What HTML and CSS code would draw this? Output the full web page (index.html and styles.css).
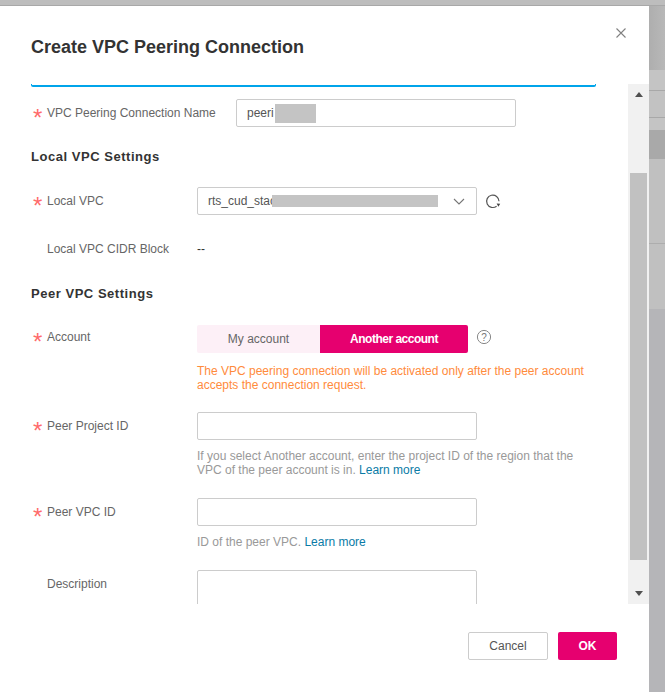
FILE: index.html
```html
<!DOCTYPE html>
<html lang="en">
<head>
<meta charset="utf-8">
<title>Create VPC Peering Connection</title>
<link rel="stylesheet" href="styles.css">
</head>
<body>
<div class="page">
  <div class="top-band"></div>
  <div class="stage">
    <section class="modal">
      <header class="modal-head">
        <h1 class="modal-title">Create VPC Peering Connection</h1>
        <svg class="close" viewBox="0 0 12 12" width="12" height="12"><path d="M1.5 1.5l9 9M10.5 1.5l-9 9" fill="none" stroke="#808080" stroke-width="1.1"/></svg>
      </header>
      <div class="modal-body">
        <div class="form">
          <div class="blue-edge"></div>
          <div class="row row-name">
            <div class="label label-wide"><span class="star">*</span>VPC Peering Connection Name</div>
            <div class="input input-name"><span class="val">peeri</span><span class="mask mask-name"></span></div>
          </div>
          <h2 class="section section-local">Local VPC Settings</h2>
          <div class="row row-local">
            <div class="label"><span class="star">*</span>Local VPC</div>
            <div class="input select"><span class="val val-select">rts_cud_stac</span><span class="mask mask-select"></span>
              <svg class="chev" viewBox="0 0 12 7" width="12" height="7"><path d="M1 1l5 5 5-5" fill="none" stroke="#777" stroke-width="1.1"/></svg>
            </div>
            <svg class="refresh" viewBox="0 0 16 16" width="16" height="16"><path d="M11.6 13.2A6.2 6.2 0 1 1 14 8.2" fill="none" stroke="#555" stroke-width="1.2"/><path d="M11.6 10.6l3.6.2-1.8 2.9z" fill="#444"/></svg>
          </div>
          <div class="row row-cidr">
            <div class="label"><span class="star star-none"></span>Local VPC CIDR Block</div>
            <div class="plain">--</div>
          </div>
          <h2 class="section section-peer">Peer VPC Settings</h2>
          <div class="row row-account">
            <div class="label label-account"><span class="star">*</span>Account</div>
            <div class="toggle">
              <div class="tab tab-off">My account</div>
              <div class="tab tab-on">Another account</div>
            </div>
            <svg class="help" viewBox="0 0 16 16" width="16" height="16"><circle cx="8" cy="8" r="6.6" fill="none" stroke="#888" stroke-width="1"/><text x="8" y="11.6" text-anchor="middle" class="help-q">?</text></svg>
          </div>
          <p class="warn">The VPC peering connection will be activated only after the peer account accepts the connection request.</p>
          <div class="row row-project">
            <div class="label"><span class="star">*</span>Peer Project ID</div>
            <div class="input"></div>
          </div>
          <p class="hint hint-project">If you select Another account, enter the project ID of the region that the VPC of the peer account is in. <a class="link">Learn more</a></p>
          <div class="row row-vpcid">
            <div class="label"><span class="star">*</span>Peer VPC ID</div>
            <div class="input"></div>
          </div>
          <p class="hint hint-vpc">ID of the peer VPC. <a class="link">Learn more</a></p>
          <div class="row row-desc">
            <div class="label label-desc"><span class="star star-none"></span>Description</div>
            <div class="input textarea"></div>
          </div>
        </div>
        <div class="scrollbar">
          <div class="arrow arrow-up"></div>
          <div class="track"><div class="thumb"></div></div>
          <div class="arrow arrow-down"></div>
        </div>
      </div>
      <footer class="modal-foot">
        <button class="btn btn-cancel">Cancel</button>
        <button class="btn btn-ok">OK</button>
      </footer>
    </section>
    <aside class="backdrop">
      <div class="bd bd-a"></div>
      <div class="bd bd-b"></div>
      <div class="bd bd-c"></div>
      <div class="bd bd-d"></div>
      <div class="bd bd-e"></div>
      <div class="bd bd-f"></div>
      <div class="bd bd-f2"></div>
      <div class="bd bd-g"></div>
    </aside>
  </div>
</div>
</body>
</html>
```
FILE: styles.css
```css
* { box-sizing: border-box; }
html, body { margin: 0; padding: 0; }
body { font-family: "Liberation Sans", Arial, sans-serif; font-size: 12px; color: #666; background: #b8b8b8; }
.page { width: 665px; height: 692px; overflow: hidden; display: flex; flex-direction: column; }
.top-band { height: 6px; background: #bdbdbd; border-bottom: 1px solid #a8a8a8; flex: none; }
.stage { flex: 1; display: flex; min-height: 0; }

.modal { width: 649px; background: #fff; display: flex; flex-direction: column; flex: none; }
.modal-head { height: 78px; flex: none; display: flex; justify-content: space-between; padding: 31px 22px 0 31px; }
.modal-title { margin: 0; font-size: 18px; line-height: 20px; font-weight: 700; color: #333; }
.close { margin-top: -10px; }

.modal-body { height: 520px; flex: none; display: flex; }
.form { flex: 1; overflow: hidden; padding-left: 31px; padding-right: 32px; }
.blue-edge { height: 3px; border: 1px solid #00a4ea; border-top: 0; border-width: 0 1px 2px; border-radius: 0 0 2px 2px; }

.row { display: flex; align-items: center; }
.label { width: 166px; flex: none; display: flex; align-items: center; color: #666; line-height: 16px; white-space: nowrap; }
.label-wide { width: 205px; }
.star { width: 16px; flex: none; padding-left: 2px; color: #ff6b6b; font-size: 24px; line-height: 24px; height: 14px; }
.star-none { height: 0; }
.input { width: 280px; height: 28px; flex: none; border: 1px solid #ccc; border-radius: 2px; background: #fff; display: flex; align-items: center; padding-left: 10px; color: #555; overflow: hidden; }
.val { flex: none; }
.mask { display: block; flex: none; background: #c4c4c4; }
.mask-name { width: 41px; height: 19px; margin-left: 1px; }
.mask-select { width: 166px; height: 12px; margin-left: -4px; }
.select { padding-left: 10px; justify-content: flex-start; }
.chev { margin-left: 15px; flex: none; }
.refresh { margin-left: 8px; flex: none; }
.plain { color: #333; }

.row-name { margin-top: 12px; }
.section { margin: 0; font-size: 13px; line-height: 16px; font-weight: 700; color: #333; letter-spacing: 0.53px; }
.section-local { margin-top: 22px; }
.row-local { margin-top: 22px; }
.row-cidr { margin-top: 26px; height: 16px; }
.section-peer { margin-top: 29px; }
.row-account { margin-top: 23px; align-items: flex-start; }
.label-account { padding-top: 4px; }
.toggle { display: flex; flex: none; height: 28px; }
.tab { height: 28px; line-height: 28px; text-align: center; }
.tab-off { width: 123px; background: #fdf0f7; color: #666; border-radius: 2px 0 0 2px; }
.tab-on { width: 148px; background: #e6006f; color: #fff; font-weight: 700; letter-spacing: -0.5px; border-radius: 0 2px 2px 0; }
.help { margin-left: 8px; margin-top: 4px; flex: none; }
.help-q { font-size: 10px; fill: #777; font-family: "Liberation Sans", Arial, sans-serif; }
.warn { margin: 11px 0 0 166px; width: 395px; color: #ff8b3c; line-height: 14px; }
.row-project { margin-top: 20px; }
.hint { margin: 0 0 0 166px; width: 395px; color: #999; line-height: 14px; }
.hint-project { margin-top: 9px; }
.row-vpcid { margin-top: 21px; }
.hint-vpc { margin-top: 9px; }
.row-desc { margin-top: 21px; align-items: flex-start; }
.label-desc { padding-top: 6px; }
.textarea { height: 64px; }
.link { color: #0a7ba6; }

.scrollbar { width: 21px; flex: none; background: #f1f1f1; display: flex; flex-direction: column; align-items: center; }
.arrow { height: 21px; flex: none; width: 100%; display: flex; align-items: center; justify-content: center; }
.arrow-up::before { content: ""; border: 4.5px solid transparent; border-top: 0; border-bottom: 5px solid #505050; }
.arrow-down::before { content: ""; border: 4.5px solid transparent; border-bottom: 0; border-top: 5px solid #505050; }
.track { flex: 1; width: 17px; padding-top: 68px; padding-bottom: 23px; display: flex; }
.thumb { flex: 1; background: #c1c1c1; }

.modal-foot { flex: 1; display: flex; justify-content: flex-end; gap: 10px; padding: 28px 32px 0 0; align-items: flex-start; }
.btn { height: 28px; font-family: inherit; font-size: 12px; border-radius: 2px; padding: 0; }
.btn-cancel { width: 80px; background: #fff; border: 1px solid #ccc; color: #555; }
.btn-ok { width: 59px; background: #e6006f; border: 0; color: #fff; font-weight: 700; }

.backdrop { flex: 1; display: flex; flex-direction: column; }
.bd { flex: none; }
.bd-a { height: 64px; background: linear-gradient(90deg, #aeaeae, #b8b8b8); }
.bd-b { height: 21px; background: #c4c4c4; border-bottom: 1px solid #a8a8a8; }
.bd-c { height: 27px; background: #c2c2c2; border-bottom: 1px solid #a8a8a8; }
.bd-d { height: 12px; background: #c4c4c4; }
.bd-e { height: 29px; background: #a9a9a9; }
.bd-f { height: 85px; background: #c0c0c0; border-bottom: 1px solid #adadad; }
.bd-f2 { height: 65px; background: #c0c0c0; }
.bd-g { flex: 1; background: #b5b5b8; }
```
